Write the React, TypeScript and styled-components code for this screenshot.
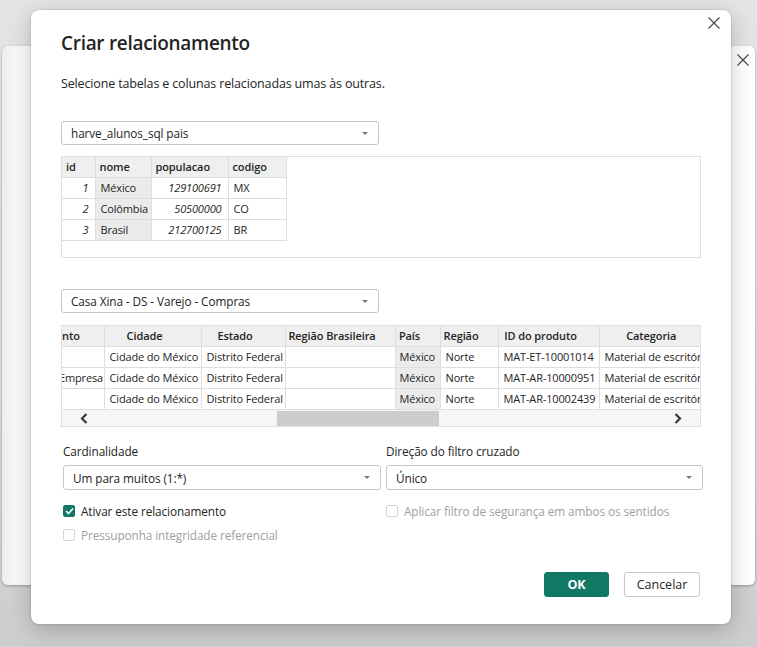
import React from 'react';
import styled, { createGlobalStyle } from 'styled-components';

const Global = createGlobalStyle`
  html, body { margin: 0; padding: 0; }
  body { font-family: "Open Sans", "Noto Sans", sans-serif; color: #252423; }
`;

const Stage = styled.div`
  position: relative;
  width: 757px;
  height: 647px;
  overflow: hidden;
  background: linear-gradient(to bottom, #e4e4e4 0%, #dadada 60%, #cdcdcd 100%);
`;

const BackPanel = styled.div`
  position: absolute;
  left: 2px;
  top: 46px;
  width: 753px;
  height: 539px;
  border-radius: 6px;
  background: linear-gradient(to right, #ebebeb 0, #f9f9f9 14px, #fff 30px);
  box-shadow: 0 1px 3px rgba(0, 0, 0, 0.28);
`;

const CloseButton = styled.button<{ $right: number; $top: number }>`
  position: absolute;
  right: ${(p) => p.$right}px;
  top: ${(p) => p.$top}px;
  width: 14px;
  height: 14px;
  padding: 0;
  border: 0;
  background: transparent;
  display: flex;
  align-items: center;
  justify-content: center;
`;

const Dialog = styled.section`
  position: absolute;
  left: 31px;
  top: 10px;
  width: 700px;
  height: 614px;
  box-sizing: border-box;
  padding: 20px 30px 27px;
  background: #fff;
  border-radius: 8px;
  box-shadow: 0 6px 22px rgba(0, 0, 0, 0.22), 0 0 2px rgba(0, 0, 0, 0.25);
  display: flex;
  flex-direction: column;
`;

const Title = styled.h1`
  margin: 0;
  font-size: 19px;
  letter-spacing: -0.3px;
  line-height: 26px;
  font-weight: 600;
  color: #252423;
`;

const Subtitle = styled.p`
  margin: 19px 0 0;
  font-size: 12.5px;
  letter-spacing: -0.15px;
  line-height: 18px;
  color: #252423;
`;

const Select = styled.div<{ $mt: number; $width?: number; $h: number }>`
  margin-top: ${(p) => p.$mt}px;
  width: ${(p) => (p.$width ? `${p.$width}px` : 'auto')};
  height: ${(p) => p.$h}px;
  box-sizing: border-box;
  border: 1px solid #c8c6c4;
  border-radius: 3px;
  padding: 0 10px 0 9px;
  display: flex;
  align-items: center;
  justify-content: space-between;
  font-size: 11.8px;
  letter-spacing: -0.1px;
  color: #252423;
  background: #fff;
`;

const Caret = styled.span`
  width: 0;
  height: 0;
  border-left: 3px solid transparent;
  border-right: 3px solid transparent;
  border-top: 3px solid #7a7876;
`;

const Preview = styled.div<{ $mt: number }>`
  margin-top: ${(p) => p.$mt}px;
  height: 102px;
  box-sizing: border-box;
  border: 1px solid #e1dfdd;
  overflow: hidden;
  display: flex;
  flex-direction: column;
`;

const Table = styled.table<{ $width: number }>`
  border-collapse: collapse;
  table-layout: fixed;
  width: ${(p) => p.$width}px;
  font-size: 11px;
  color: #252423;
  flex: none;
`;

const Th = styled.th<{ $center?: boolean }>`
  height: 20px;
  box-sizing: border-box;
  padding: ${(p) => (p.$center ? '0 16px 0 0' : '0 4px')};
  text-align: ${(p) => (p.$center ? 'center' : 'left')};
  font-weight: 600;
  letter-spacing: -0.1px;
  background: #efefef;
  border-right: 1px solid #dedede;
  border-bottom: 1px solid #dedede;
  white-space: nowrap;
  overflow: hidden;
  &:last-child { border-right: 0; }
`;

const Td = styled.td<{ $num?: boolean; $sel?: boolean; $pad?: number }>`
  height: 21px;
  box-sizing: border-box;
  padding: 0 ${(p) => (p.$num ? 6 : p.$pad ?? 5)}px 0 ${(p) => p.$pad ?? 5}px;
  text-align: ${(p) => (p.$num ? 'right' : 'left')};
  font-style: ${(p) => (p.$num ? 'italic' : 'normal')};
  letter-spacing: -0.15px;
  background: ${(p) => (p.$sel ? '#ebebeb' : '#fff')};
  border-right: 1px solid #dedede;
  border-bottom: 1px solid #dedede;
  white-space: nowrap;
  overflow: hidden;
  &:last-child { border-right: 0; }
`;

const Table1 = styled(Table)`
  border-right: 1px solid #dedede;
`;

const Clipped = styled.span<{ $shift: number }>`
  display: inline-block;
  margin-left: ${(p) => p.$shift}px;
`;

const ScrollBar = styled.div`
  height: 18px;
  flex: none;
  display: flex;
  align-items: stretch;
  background: #f6f6f6;
`;

const ScrollArrow = styled.div`
  width: 44px;
  display: flex;
  align-items: center;
  justify-content: center;
`;

const ScrollTrack = styled.div`
  flex: 1;
  display: flex;
  align-items: stretch;
  padding: 1px 0;
`;

const Thumb = styled.div<{ $left: number; $width: number }>`
  margin-left: ${(p) => p.$left}px;
  width: ${(p) => p.$width}px;
  background: #cdcdcd;
`;

const Settings = styled.div`
  margin: 16px -2px 0 2px;
  display: grid;
  grid-template-columns: 318px 317px;
  column-gap: 5px;
`;

const Field = styled.div`
  display: flex;
  flex-direction: column;
`;

const Label = styled.label`
  font-size: 11.8px;
  letter-spacing: -0.1px;
  line-height: 16px;
  color: #252423;
`;

const CheckRow = styled.div<{ $mt: number; $disabled?: boolean }>`
  margin-top: ${(p) => p.$mt}px;
  display: flex;
  align-items: center;
  gap: 6px;
  height: 16px;
  font-size: 11.8px;
  letter-spacing: -0.1px;
  color: ${(p) => (p.$disabled ? '#a19f9d' : '#252423')};
`;

const Box = styled.span<{ $checked?: boolean }>`
  width: 12px;
  height: 12px;
  box-sizing: border-box;
  border-radius: 2px;
  border: 1px solid ${(p) => (p.$checked ? '#117865' : '#d6d4d2')};
  background: ${(p) => (p.$checked ? '#117865' : '#fff')};
  display: flex;
  align-items: center;
  justify-content: center;
  flex: none;
`;

const Footer = styled.div`
  margin-top: auto;
  margin-right: 1px;
  display: flex;
  justify-content: flex-end;
  gap: 15px;
`;

const Button = styled.button<{ $primary?: boolean; $w: number }>`
  width: ${(p) => p.$w}px;
  height: 25px;
  box-sizing: border-box;
  border-radius: 3px;
  font-family: inherit;
  font-size: 12.5px;
  font-weight: ${(p) => (p.$primary ? 700 : 400)};
  color: ${(p) => (p.$primary ? '#fff' : '#252423')};
  background: ${(p) => (p.$primary ? '#117865' : '#fff')};
  border: 1px solid ${(p) => (p.$primary ? '#117865' : '#c8c6c4')};
  padding: 0;
`;

const XIcon = () => (
  <svg width="12" height="12" viewBox="0 0 12 12">
    <path d="M0.5 0.5 L11.5 11.5 M11.5 0.5 L0.5 11.5" stroke="#444" strokeWidth="1.1" fill="none" />
  </svg>
);

const Chevron = ({ dir }: { dir: 'left' | 'right' }) => (
  <svg width="8" height="11" viewBox="0 0 8 11">
    <path
      d={dir === 'left' ? 'M6.5 1 L2 5.5 L6.5 10' : 'M1.5 1 L6 5.5 L1.5 10'}
      stroke="#3b3a39"
      strokeWidth="2.2"
      fill="none"
    />
  </svg>
);

const Check = () => (
  <svg width="9" height="8" viewBox="0 0 9 8">
    <path d="M1 4 L3.5 6.5 L8 1.5" stroke="#fff" strokeWidth="1.6" fill="none" />
  </svg>
);

const paisRows = [
  ['1', 'México', '129100691', 'MX'],
  ['2', 'Colômbia', '50500000', 'CO'],
  ['3', 'Brasil', '212700125', 'BR'],
];

const t2Cols = [
  { h: 'nto', w: 42 },
  { h: 'Cidade', w: 97 },
  { h: 'Estado', w: 84 },
  { h: 'Região Brasileira', w: 110 },
  { h: 'País', w: 45 },
  { h: 'Região', w: 58 },
  { h: 'ID do produto', w: 101 },
  { h: 'Categoria', w: 120 },
];

const comprasRows = [
  ['', 'Cidade do México', 'Distrito Federal', '', 'México', 'Norte', 'MAT-ET-10001014', 'Material de escritório'],
  ['Empresa', 'Cidade do México', 'Distrito Federal', '', 'México', 'Norte', 'MAT-AR-10000951', 'Material de escritório'],
  ['', 'Cidade do México', 'Distrito Federal', '', 'México', 'Norte', 'MAT-AR-10002439', 'Material de escritório'],
];

export default function App() {
  const t2Width = t2Cols.reduce((s, c) => s + c.w, 0);
  return (
    <Stage>
      <Global />
      <BackPanel>
        <CloseButton $right={5} $top={7} aria-label="Fechar">
          <XIcon />
        </CloseButton>
      </BackPanel>
      <Dialog>
        <CloseButton $right={10} $top={6} aria-label="Fechar">
          <XIcon />
        </CloseButton>
        <Title>Criar relacionamento</Title>
        <Subtitle>Selecione tabelas e colunas relacionadas umas às outras.</Subtitle>

        <Select $mt={28} $width={318} $h={24}>
          <span>harve_alunos_sql pais</span>
          <Caret />
        </Select>
        <Preview $mt={11}>
          <Table1 $width={224}>
            <colgroup>
              <col style={{ width: 33 }} />
              <col style={{ width: 56 }} />
              <col style={{ width: 77 }} />
              <col style={{ width: 58 }} />
            </colgroup>
            <thead>
              <tr>
                <Th>id</Th>
                <Th>nome</Th>
                <Th>populacao</Th>
                <Th>codigo</Th>
              </tr>
            </thead>
            <tbody>
              {paisRows.map((r) => (
                <tr key={r[0]}>
                  <Td $num>{r[0]}</Td>
                  <Td $sel>{r[1]}</Td>
                  <Td $num>{r[2]}</Td>
                  <Td>{r[3]}</Td>
                </tr>
              ))}
            </tbody>
          </Table1>
        </Preview>

        <Select $mt={31} $width={318} $h={24}>
          <span>Casa Xina - DS - Varejo - Compras</span>
          <Caret />
        </Select>
        <Preview $mt={12}>
          <Table $width={t2Width}>
            <colgroup>
              {t2Cols.map((c) => (
                <col key={c.h} style={{ width: c.w }} />
              ))}
            </colgroup>
            <thead>
              <tr>
                {t2Cols.map((c, i) =>
                  i === 0 ? (
                    <Th key={c.h}>
                      <Clipped $shift={-4}>{c.h}</Clipped>
                    </Th>
                  ) : (
                    <Th key={c.h} $center>
                      {c.h}
                    </Th>
                  ),
                )}
              </tr>
            </thead>
            <tbody>
              {comprasRows.map((r, ri) => (
                <tr key={ri}>
                  {r.map((v, ci) =>
                    ci === 0 ? (
                      <Td key={ci} $pad={0}>
                        <Clipped $shift={-3}>{v}</Clipped>
                      </Td>
                    ) : (
                      <Td key={ci} $sel={ci === 4} $pad={ci === 4 ? 4 : 5}>
                        {v}
                      </Td>
                    ),
                  )}
                </tr>
              ))}
            </tbody>
          </Table>
          <ScrollBar>
            <ScrollArrow>
              <Chevron dir="left" />
            </ScrollArrow>
            <ScrollTrack>
              <Thumb $left={171} $width={162} />
            </ScrollTrack>
            <ScrollArrow>
              <Chevron dir="right" />
            </ScrollArrow>
          </ScrollBar>
        </Preview>

        <Settings>
          <Field>
            <Label>Cardinalidade</Label>
            <Select $mt={6} $h={25}>
              <span>Um para muitos (1:*)</span>
              <Caret />
            </Select>
            <CheckRow $mt={13}>
              <Box $checked>
                <Check />
              </Box>
              Ativar este relacionamento
            </CheckRow>
            <CheckRow $mt={8} $disabled>
              <Box />
              Pressuponha integridade referencial
            </CheckRow>
          </Field>
          <Field>
            <Label>Direção do filtro cruzado</Label>
            <Select $mt={6} $h={25}>
              <span>Único</span>
              <Caret />
            </Select>
            <CheckRow $mt={13} $disabled>
              <Box />
              Aplicar filtro de segurança em ambos os sentidos
            </CheckRow>
          </Field>
        </Settings>

        <Footer>
          <Button $primary $w={65}>
            OK
          </Button>
          <Button $w={76}>Cancelar</Button>
        </Footer>
      </Dialog>
    </Stage>
  );
}
